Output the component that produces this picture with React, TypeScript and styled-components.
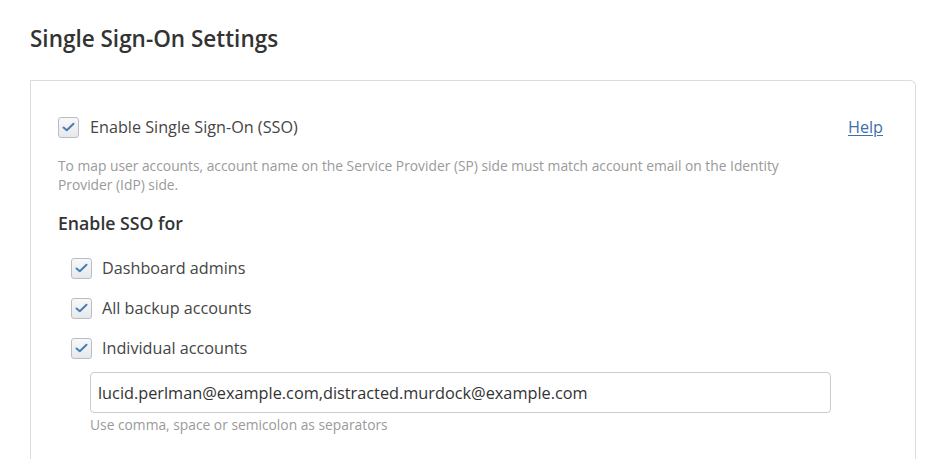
import styled, { createGlobalStyle } from "styled-components"

const GlobalStyle = createGlobalStyle`
  html, body {
    margin: 0;
    padding: 0;
    background: #ffffff;
    font-family: "Open Sans", "Noto Sans", sans-serif;
  }
  * { box-sizing: border-box; }
`

const Page = styled.div`
  padding: 22px 31px 0 30px;
  height: 459px;
  display: flex;
  flex-direction: column;
`

const Title = styled.h1`
  margin: 0 0 24px 0;
  font-size: 22.5px;
  line-height: 34px;
  font-weight: 600;
  color: #333333;
`

const Card = styled.div`
  flex: 1;
  border: 1px solid #dcdcdc;
  border-bottom: none;
  border-radius: 0 6px 0 0;
  padding: 26px 32px 0 27px;
`

const TopRow = styled.div`
  display: flex;
  align-items: center;
  justify-content: space-between;
`

const CheckRow = styled.label<{ $indent?: number }>`
  display: flex;
  align-items: center;
  gap: ${p => (p.$indent ? 10 : 11)}px;
  padding-left: ${p => p.$indent ?? 0}px;
  height: 40px;
  font-size: 16.2px;
  color: #454545;
  cursor: pointer;
`

const Box = styled.span`
  width: 21px;
  height: 21px;
  border: 1px solid #b9bdc2;
  border-radius: 3px;
  background: linear-gradient(#f7f8f9, #e6e9ec);
  display: flex;
  align-items: center;
  justify-content: center;
  flex-shrink: 0;
`

const HelpLink = styled.a`
  font-size: 16.2px;
  color: #3d6fa8;
  text-decoration: underline;
  text-underline-offset: 2px;
`

const Note = styled.p<{ $top?: number }>`
  margin: ${p => p.$top ?? 0}px 0 0 0;
  font-size: 13.8px;
  line-height: 19px;
  color: #9a9a9a;
  max-width: 740px;
`

const SectionTitle = styled.h2`
  margin: 16px 0 12px 0;
  font-size: 17.7px;
  line-height: 26px;
  font-weight: 600;
  color: #333333;
`

const List = styled.div`
  display: flex;
  flex-direction: column;
`

const AccountsBlock = styled.div`
  padding-left: 32px;
  margin-top: 4px;
  display: flex;
  flex-direction: column;
  gap: 2px;
`

const EmailInput = styled.input`
  width: 741px;
  height: 41px;
  border: 1px solid #cccccc;
  border-radius: 4px;
  padding: 0 7px;
  font-family: "Open Sans", "Noto Sans", sans-serif;
  font-size: 16.3px;
  color: #333333;
  outline: none;
`

function Check() {
  return (
    <Box>
      <svg width="13" height="10" viewBox="0 0 13 10">
        <path d="M1.5 5.5 L4.8 8.3 L11.5 1.8" fill="none" stroke="#4a7db4" strokeWidth="2" strokeLinecap="round" strokeLinejoin="round" />
      </svg>
    </Box>
  )
}

export default function App() {
  const targets = ["Dashboard admins", "All backup accounts", "Individual accounts"]
  return (
    <>
      <GlobalStyle />
      <Page>
        <Title>Single Sign-On Settings</Title>
        <Card>
          <TopRow>
            <CheckRow>
              <Check />
              Enable Single Sign-On (SSO)
            </CheckRow>
            <HelpLink href="#">Help</HelpLink>
          </TopRow>
          <Note $top={9}>
            To map user accounts, account name on the Service Provider (SP) side must match account email on the Identity Provider (IdP) side.
          </Note>
          <SectionTitle>Enable SSO for</SectionTitle>
          <List>
            {targets.map(t => (
              <CheckRow key={t} $indent={13}>
                <Check />
                {t}
              </CheckRow>
            ))}
          </List>
          <AccountsBlock>
            <EmailInput defaultValue="lucid.perlman@example.com,distracted.murdock@example.com" />
            <Note>Use comma, space or semicolon as separators</Note>
          </AccountsBlock>
        </Card>
      </Page>
    </>
  )
}
